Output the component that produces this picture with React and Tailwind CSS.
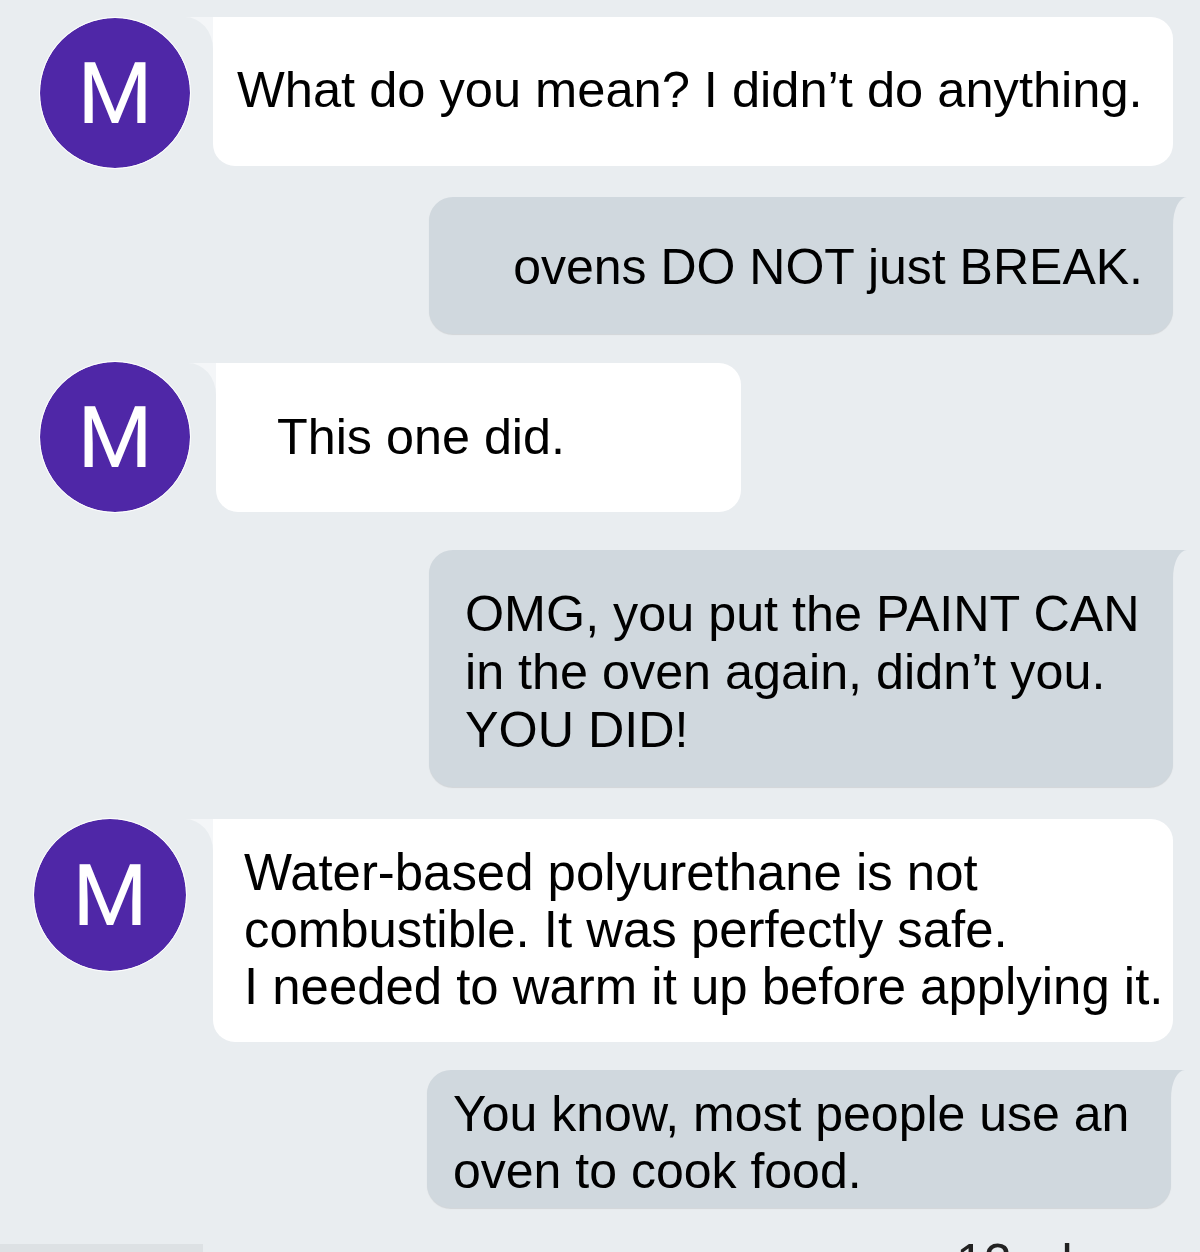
import React from 'react';

const Avatar = ({ className = '' }) => (
  <div
    className={`shrink-0 rounded-full bg-[#4f27a7] bg-clip-padding border-[1.5px] border-white flex items-center justify-center text-white font-['Roboto',sans-serif] text-[86px] leading-none ${className}`}
  >
    <span className="mt-[1px]">M</span>
  </div>
);

const InTail = () => (
  <svg className="absolute -left-[28px] top-0" width="28" height="32" viewBox="0 0 28 32">
    <path d="M0 0 H28 V32 A28 32 0 0 0 0 0 Z" fill="#f4f6f8" />
  </svg>
);

const OutTail = () => (
  <svg className="absolute -right-[14px] top-0" width="14" height="28" viewBox="0 0 14 28">
    <path d="M14 0 H0 V28 A14 28 0 0 1 14 0 Z" fill="#d0d8de" />
  </svg>
);

const Incoming = ({ className = '', children }) => (
  <div className={`relative bg-white rounded-[22px] rounded-tl-none text-black ${className}`}>
    <InTail />
    {children}
  </div>
);

const Outgoing = ({ className = '', children }) => (
  <div
    className={`relative bg-[#d0d8de] rounded-[24px] rounded-tr-none text-black shadow-[0_1px_1px_rgba(0,0,0,0.10)] ${className}`}
  >
    <OutTail />
    {children}
  </div>
);

export default function App() {
  return (
    <div className="w-[1200px] h-[1252px] bg-[#e9edf0] overflow-hidden relative font-['Liberation_Sans',Arial,sans-serif]">
      <div className="flex flex-col pt-[17px]">
        {/* row 1 */}
        <div className="flex items-start">
          <Avatar className="ml-[39px] w-[152px] h-[152px]" />
          <Incoming className="ml-[22px] w-[960px] h-[149px] flex items-center pl-[24px]">
            <p className="text-[50.6px] leading-none whitespace-nowrap -mt-[2px]">
              What do you mean? I didn’t do anything.
            </p>
          </Incoming>
        </div>

        {/* row 2 */}
        <div className="flex mt-[28px]">
          <Outgoing className="ml-[429px] w-[744px] h-[137px] flex items-center justify-end pr-[30px]">
            <p className="text-[50px] leading-none whitespace-nowrap mt-[2px]">ovens DO NOT just BREAK.</p>
          </Outgoing>
        </div>

        {/* row 3 */}
        <div className="flex items-start mt-[27px]">
          <Avatar className="ml-[39px] w-[152px] h-[152px]" />
          <Incoming className="ml-[25px] mt-[2px] w-[525px] h-[149px] flex items-center pl-[61px]">
            <p className="text-[50.3px] leading-none whitespace-nowrap">This one did.</p>
          </Incoming>
        </div>

        {/* row 4 */}
        <div className="flex mt-[37px]">
          <Outgoing className="ml-[429px] w-[744px] pl-[36px] pt-[35px] pb-[28px]">
            <p className="text-[50.3px] leading-[58px] whitespace-nowrap">
              OMG, you put the PAINT CAN
              <br />
              in the oven again, didn’t you.
              <br />
              YOU DID!
            </p>
          </Outgoing>
        </div>

        {/* row 5 */}
        <div className="flex items-start mt-[31px]">
          <Avatar className="ml-[33px] w-[154px] h-[154px]" />
          <Incoming className="ml-[26px] mt-[1px] w-[960px] pl-[31px] pt-[25px] pb-[27px]">
            <p className="text-[50.9px] leading-[57px] whitespace-nowrap">
              Water-based polyurethane is not
              <br />
              combustible. It was perfectly safe.
              <br />
              I needed to warm it up before applying it.
            </p>
          </Incoming>
        </div>

        {/* row 6 */}
        <div className="flex mt-[28px]">
          <Outgoing className="ml-[427px] w-[744px] pl-[26px] pt-[16px] pb-[8px]">
            <p className="text-[50px] leading-[57px] whitespace-nowrap">
              You know, most people use an
              <br />
              oven to cook food.
            </p>
          </Outgoing>
        </div>

        {/* footer */}
        <div className="flex items-start mt-[29px] h-[20px]">
          <div className="w-[203px] h-[10px] mt-[7px] bg-[#dde1e4]" />
          <p className="ml-[753px] text-[50px] leading-none text-[#222] whitespace-nowrap">12 wks</p>
        </div>
      </div>
    </div>
  );
}
